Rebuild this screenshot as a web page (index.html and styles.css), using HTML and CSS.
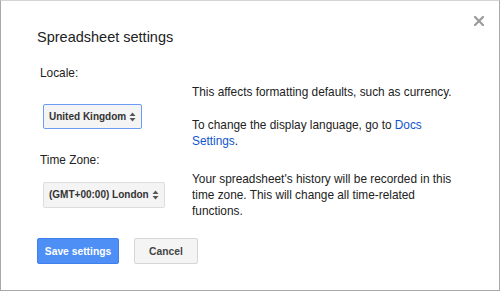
FILE: index.html
```html
<!DOCTYPE html>
<html lang="en">
<head>
    <meta charset="UTF-8">
    <title>Spreadsheet settings</title>
    <link rel="stylesheet" href="styles.css">
</head>
<body>
    <div class="dialog">
        <button class="close-btn" title="Close">
            <svg width="10" height="10" viewBox="0 0 10 10">
                <path d="M1 1 L9 9 M9 1 L1 9" stroke="#9a9a9a" stroke-width="2.2" stroke-linecap="square"/>
            </svg>
        </button>
        <h1 class="title">Spreadsheet settings</h1>
        <div class="form">
            <div class="label">Locale:</div>
            <div class="field">
                <div class="select focused locale">
                    <span>United Kingdom</span>
                    <svg class="arrows" width="7" height="10" viewBox="0 0 7 10">
                        <path d="M0.5 4 L3.5 0.5 L6.5 4 Z M0.5 6 L3.5 9.5 L6.5 6 Z" fill="#555"/>
                    </svg>
                </div>
            </div>
            <div class="desc">
                <p>This affects formatting defaults, such as currency.</p>
                <p>To change the display language, go to <a href="#">Docs</a><br><a href="#">Settings</a>.</p>
            </div>

            <div class="label">Time Zone:</div>
            <div class="field">
                <div class="select zone">
                    <span>(GMT+00:00) London</span>
                    <svg class="arrows" width="7" height="10" viewBox="0 0 7 10">
                        <path d="M0.5 4 L3.5 0.5 L6.5 4 Z M0.5 6 L3.5 9.5 L6.5 6 Z" fill="#555"/>
                    </svg>
                </div>
            </div>
            <div class="desc">
                <p>Your spreadsheet's history will be recorded in this<br>time zone. This will change all time-related<br>functions.</p>
            </div>
        </div>
        <div class="buttons">
            <button class="btn primary">Save settings</button>
            <button class="btn">Cancel</button>
        </div>
    </div>
</body>
</html>
```

FILE: styles.css
```css
body {
    margin: 0;
    background: #fff;
    font-family: "Liberation Sans", Arial, sans-serif;
    color: #222;
}
.dialog {
    position: relative;
    width: 500px;
    height: 291px;
    box-sizing: border-box;
    border: 1px solid #a8a8a8;
    border-top-color: #d4d4d4;
    padding: 28px 0 0 36px;
    background: #fff;
}
.close-btn {
    position: absolute;
    top: 15px;
    right: 15px;
    padding: 0;
    border: none;
    background: none;
    width: 10px;
    height: 10px;
    cursor: pointer;
}
.close-btn svg {
    display: block;
}
.title {
    margin: 0;
    font-size: 14.5px;
    line-height: 17px;
    font-weight: normal;
    color: #222;
}
.form {
    display: grid;
    grid-template-columns: 152px 290px;
    row-gap: 3px;
    margin: 19px 0 0 3px;
    font-size: 11.85px;
    line-height: 16px;
}
.label {
    grid-column: 1 / 3;
}
.field {
    display: flex;
    align-items: center;
    padding-left: 3px;
}
.desc p {
    margin: 0;
}
.desc p + p {
    margin-top: 17px;
}
.desc a {
    color: #1155cc;
    text-decoration: none;
}
.select {
    display: flex;
    align-items: center;
    justify-content: space-between;
    box-sizing: border-box;
    padding: 0 5px 0 5px;
    border: 1px solid #dcdcdc;
    border-radius: 2px;
    background: #f4f4f4;
    font-size: 10px;
    font-weight: bold;
    color: #333;
    white-space: nowrap;
}
.select.focused {
    border-color: #6d9cf4;
}
.select.locale {
    width: 99px;
    height: 25px;
}
.select.zone {
    width: 122px;
    height: 26px;
}
.arrows {
    display: block;
    flex-shrink: 0;
}
.buttons {
    display: flex;
    gap: 15px;
    margin-top: 19px;
}
.btn {
    height: 26px;
    box-sizing: border-box;
    padding: 0;
    border: 1px solid #d6d6d6;
    border-radius: 2px;
    background: #f4f4f4;
    font-family: "Liberation Sans", Arial, sans-serif;
    font-size: 10.3px;
    font-weight: bold;
    color: #444;
    width: 64px;
}
.btn.primary {
    width: 82px;
    background: #4d8ff5;
    border-color: #3f80ec;
    color: #fff;
}
```
